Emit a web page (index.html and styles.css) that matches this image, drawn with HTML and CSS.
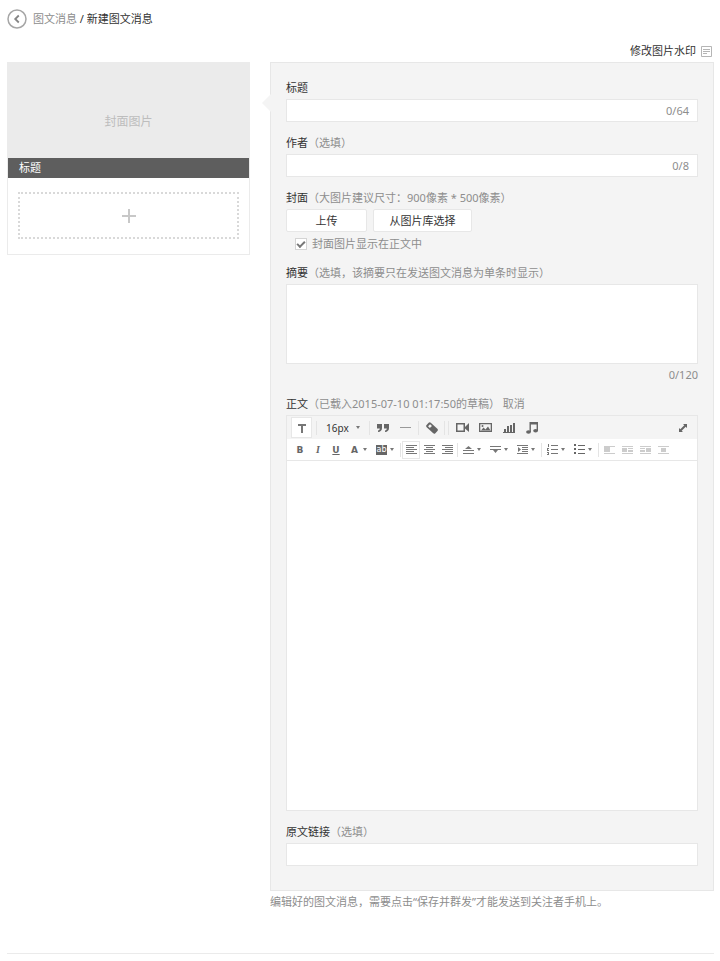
FILE: index.html
```
<!DOCTYPE html>
<html lang="zh-CN">
<head>
<meta charset="utf-8">
<meta name="viewport" content="width=device-width, initial-scale=1">
<title>新建图文消息</title>
<link rel="stylesheet" href="styles.css">
</head>
<body>
<header class="crumbs">
  <a class="back" href="#" aria-label="返回"><svg width="20" height="20" viewBox="0 0 20 20" fill="none"><circle cx="10" cy="10" r="9" stroke="#a6a6a6" stroke-width="1.5"/><path d="M11.8 6.5 8.2 10l3.6 3.5" stroke="#858585" stroke-width="1.8"/></svg></a>
  <nav><a class="muted" href="#">图文消息</a> / <span>新建图文消息</span></nav>
</header>
<div class="tools">
  <a href="#">修改图片水印
    <svg width="11" height="11" viewBox="0 0 11 11" fill="none" stroke="#b5b5b5"><path d="M.5.5h10v10H.5zM2 3.5h7M2 5.5h7M2 7.5h4"/></svg></a>
</div>
<main class="layout">
  <aside class="card">
    <div class="cover">封面图片</div>
    <div class="cover-title">标题</div>
    <button class="add" type="button" aria-label="添加"><svg width="14" height="14" viewBox="0 0 14 14" fill="#c8c8c8" shape-rendering="crispEdges"><path d="M6 0h2v14H6zM0 6h14v2H0z"/></svg></button>
  </aside>
  <section class="content">
    <form class="panel">
      <div class="field">
        <label for="title">标题</label>
        <div class="box"><input id="title" type="text"><span class="count">0/64</span></div>
      </div>
      <div class="field">
        <label for="author">作者<span class="muted">（选填）</span></label>
        <div class="box"><input id="author" type="text"><span class="count">0/8</span></div>
      </div>
      <div class="field">
        <div class="label">封面<span class="muted">（大图片建议尺寸：900像素 * 500像素）</span></div>
        <div class="uploads">
          <button class="btn" type="button">上传</button>
          <button class="btn wide" type="button">从图片库选择</button>
        </div>
        <label class="check"><input type="checkbox" checked>封面图片显示在正文中</label>
      </div>
      <div class="field">
        <label for="summary">摘要<span class="muted">（选填，该摘要只在发送图文消息为单条时显示）</span></label>
        <textarea id="summary" class="summary"></textarea>
        <span class="total">0/120</span>
      </div>
      <div class="field">
        <div class="label"><label for="body">正文</label><span class="muted">（已载入2015-07-10 01:17:50的草稿） <a href="#">取消</a></span></div>
        <div class="editor">
          <div class="bar top">
            <button class="tb large on" type="button" aria-label="文字"><svg width="12" height="12" fill="#777"><path d="M2 2h8v2H7v7H5V4H2z"/></svg></button>
            <i class="sep roomy"></i>
            <span class="size"><select aria-label="字号"><option>16px</option></select><i class="caret"></i></span>
            <i class="sep"></i>
            <button class="tb large" type="button" aria-label="引用"><svg width="12" height="12" fill="#666"><path d="M0 2h5v4C5 8.500 3.500 9.800 1 10V8.500C2.300 8.300 2.800 7.500 2.800 6.500H0zM7 2h5v4c0 2.500-1.500 3.800-4 4V8.500c1.300-.2 1.800-1 1.800-2H7z"/></svg></button>
            <button class="tb large" type="button" aria-label="分隔线"><svg width="12" height="12" fill="#999"><path d="M0 5h11v1H0z"/></svg></button>
            <i class="sep"></i>
            <button class="tb large" type="button" aria-label="清除格式"><svg width="12" height="12"><g transform="rotate(43 6 6)"><rect x="0" y="3" width="12" height="6" rx="1.500" fill="#666"/><rect x="2" y="4.500" width="2.500" height="3" fill="#f4f4f4"/></g></svg></button>
            <i class="sep"></i><i class="sep"></i>
            <button class="tb large" type="button" aria-label="视频"><svg width="13" height="12" fill="#666"><path fill-rule="evenodd" d="M0 1h9v9H0zM1.500 2.500v6h6v-6zM9 5l4-4v9L9 6.500z"/></svg></button>
            <button class="tb large" type="button" aria-label="图片"><svg width="13" height="12" fill="#666"><path fill-rule="evenodd" d="M0 1h13v9H0zM1.300 2.300v6.400h10.400V2.300z"/><path d="m2 8.500 2.500-3 2 2L9 4.500l2.500 4z"/><circle cx="3.500" cy="4" r="1"/></svg></button>
            <button class="tb large" type="button" aria-label="投票"><svg width="12" height="12" fill="#666"><path d="M0 10h12v1H0zM1 7h2v3H1zM4 4h2v6H4zM7 3h2v7H7zM10 1h2v9h-2z"/></svg></button>
            <button class="tb large" type="button" aria-label="音乐"><svg width="12" height="12" fill="#666"><path d="M3.500 0H12v9h-1.400V2.400H4.900V10H3.500z"/><ellipse cx="2.500" cy="10" rx="2.400" ry="1.700"/><ellipse cx="9.600" cy="8.800" rx="2.400" ry="1.700"/></svg></button>
            <button class="tb large end" type="button" aria-label="全屏"><svg width="10" height="10" fill="#666"><path d="M5 1h4v4L7.700 3.700 3.700 7.700 5 9H1V5l1.300 1.300 4-4z"/></svg></button>
          </div>
          <div class="bar bottom">
            <button class="tb glyph" type="button"><b>B</b></button>
            <button class="tb glyph" type="button"><em>I</em></button>
            <button class="tb glyph" type="button"><u>U</u></button>
            <button class="tb combo glyph" type="button"><span>A</span><i class="caret"></i></button>
            <button class="tb combo glyph" type="button"><span class="mark">ab</span><i class="caret"></i></button>
            <i class="sep"></i>
            <button class="tb on" type="button" aria-label="左对齐"><svg width="11" height="9" fill="#777"><path d="M0 0h11v1H0zM0 2h8v1H0zM0 4h11v1H0zM0 6h8v1H0zM0 8h11v1H0z"/></svg></button>
            <button class="tb" type="button" aria-label="居中"><svg width="11" height="9" fill="#777"><path d="M0 0h11v1H0zM2 2h7v1H2zM0 4h11v1H0zM2 6h7v1H2zM0 8h11v1H0z"/></svg></button>
            <button class="tb" type="button" aria-label="右对齐"><svg width="11" height="9" fill="#777"><path d="M0 0h11v1H0zM3 2h8v1H3zM0 4h11v1H0zM3 6h8v1H3zM0 8h11v1H0z"/></svg></button>
            <i class="sep"></i>
            <button class="tb combo" type="button" aria-label="段前距"><svg width="11" height="9" fill="#777"><path d="m2 4 3.500-3L9 4zM0 5h11v1H0zM0 8h11v1H0z"/></svg><i class="caret"></i></button>
            <button class="tb combo" type="button" aria-label="段后距"><svg width="11" height="9" fill="#777"><path d="M0 1h11v1H0zM0 4h11v1H0zM3 5h5L5.500 8z"/></svg><i class="caret"></i></button>
            <button class="tb combo" type="button" aria-label="缩进"><svg width="11" height="9" fill="#777"><path d="M0 0h11v1H0zM5 2h6v1H5zM5 4h6v1H5zM5 6h6v1H5zM0 8h11v1H0zM1 2l3 2.500L1 7z"/></svg><i class="caret"></i></button>
            <i class="sep"></i>
            <button class="tb combo" type="button" aria-label="有序列表"><svg width="11" height="11" fill="#777"><path d="M4 1h7v1H4zM4 5h7v1H4zM4 9h7v1H4zM1 0h1v3H1zM0 4h2v1H1v1h1v1H0zM0 8h2v3H0v-1h1V9H0z"/></svg><i class="caret"></i></button>
            <button class="tb combo" type="button" aria-label="无序列表"><svg width="11" height="11" fill="#666"><path d="M0 0h2v2H0zM0 4h2v2H0zM0 8h2v2H0zM4 1h7v1H4zM4 5h7v1H4zM4 9h7v1H4z"/></svg><i class="caret"></i></button>
            <i class="sep"></i>
            <div class="floats">
            <button class="tb" type="button" aria-label="图片靠左"><svg width="11" height="8" fill="#ccc"><path d="M0 0h11v1H0zM0 1h6v5H0zM0 7h11v1H0z"/></svg></button>
            <button class="tb" type="button" aria-label="图片左环绕"><svg width="11" height="8" fill="#ccc"><path d="M0 0h11v1H0zM0 2h5v4H0zM6 2h5v1H6zM6 4h5v2H6zM0 7h11v1H0z"/></svg></button>
            <button class="tb" type="button" aria-label="图片右环绕"><svg width="11" height="8" fill="#ccc"><path d="M0 0h11v1H0zM6 2h5v4H6zM0 2h5v1H0zM0 4h5v2H0zM0 7h11v1H0z"/></svg></button>
            <button class="tb" type="button" aria-label="图片居中"><svg width="11" height="8" fill="#ccc"><path d="M0 0h11v1H0zM3 2h5v4H3zM0 7h11v1H0z"/></svg></button>
            </div>
          </div>
          <textarea id="body"></textarea>
        </div>
      </div>
      <div class="field">
        <label for="link">原文链接<span class="muted">（选填）</span></label>
        <div class="box"><input id="link" type="url"></div>
      </div>
    </form>
    <p class="note">编辑好的图文消息，需要点击“保存并群发”才能发送到关注者手机上。</p>
  </section>
</main>
<hr class="rule">
</body>
</html>
```
FILE: styles.css
```
*, *::before { box-sizing: border-box; }
body {
  margin: 0;
  padding: 9px 6px 7px 7px;
  background: #fff;
  color: #333;
  font: 11px/16px "Noto Sans", "Noto Sans CJK SC", sans-serif;
}
a { color: inherit; text-decoration: none; }
svg { display: block; }
button, input, textarea, select {
  margin: 0;
  padding: 0;
  border: 0;
  border-radius: 0;
  background: none;
  color: inherit;
  font: inherit;
}
.muted { color: #8d8d8d; }

.crumbs { display: flex; align-items: center; gap: 6px; height: 20px; }
.tools { display: flex; justify-content: flex-end; margin-top: 14px; padding-right: 2px; }
.tools a { display: flex; align-items: center; gap: 5px; }

.layout {
  display: grid;
  grid-template-columns: 243px minmax(0, 1fr);
  gap: 20px;
  align-items: start;
  margin-top: 3px;
}
.card { border: 1px solid #ebebeb; padding-bottom: 15px; }
.cover {
  display: flex;
  align-items: center;
  justify-content: center;
  height: 95px;
  padding-top: 22px;
  background: #ebebeb;
  color: #bdbdbd;
  font-size: 12px;
}
.cover-title { padding: 2px 11px; background: #5e5e5e; color: #fff; }
.add {
  display: flex;
  align-items: center;
  justify-content: center;
  width: calc(100% - 20px);
  height: 47px;
  margin: 14px 10px 0;
  border: 2px dotted #d9d9d9;
}

.panel {
  position: relative;
  display: flex;
  flex-direction: column;
  gap: 13px;
  padding: 17px 15px 24px;
  background: #f4f4f4;
  border: 1px solid #e7e7e7;
}
.panel::before {
  content: "";
  position: absolute;
  top: 31px;
  left: -9px;
  border: solid transparent;
  border-width: 9px 9px 9px 0;
  border-right-color: #f4f4f4;
}
.field { display: flex; flex-direction: column; gap: 3px; }
.box { display: flex; align-items: center; height: 23px; border: 1px solid #e7e7e7; background: #fff; }
.box input { flex: 1; min-width: 0; height: 100%; padding: 0 8px; }
.count { padding-right: 8px; color: #8d8d8d; }
.total { align-self: flex-end; color: #8d8d8d; }
.uploads { display: flex; gap: 6px; }
.btn { width: 81px; height: 23px; border: 1px solid #e7e7e7; border-radius: 2px; background: #fff; }
.btn.wide { width: 99px; }
.check { display: flex; align-items: center; gap: 5px; padding-left: 9px; color: #8d8d8d; }
.check input {
  width: 12px;
  height: 12px;
  appearance: none;
  display: grid;
  place-items: center;
  border: 1px solid #d4d4d4;
  background: #fff;
}
.check input:checked::before {
  content: "";
  width: 8px;
  height: 5px;
  border: solid #777;
  border-width: 0 0 2px 2px;
  transform: translateY(-1px) rotate(-45deg);
}
.field .check { margin-top: 1px; }
textarea { display: block; width: 100%; padding: 8px; resize: none; }
.summary { height: 80px; border: 1px solid #e7e7e7; background: #fff; }

.editor { border: 1px solid #e7e7e7; background: #fff; }
.editor textarea { height: 349px; }
.bar { display: flex; align-items: center; }
.top { height: 23px; padding: 0 4px; background: #f4f4f4; }
.bottom { height: 22px; padding-left: 4px; border-bottom: 1px solid #e7e7e7; }
.sep { flex: none; width: 1px; height: 14px; margin: 0 1px; background: #e4e4e4; }
.sep.roomy { margin: 0 4px; }
.top .sep + .sep { margin: 0 2px; }
.tb { display: flex; align-items: center; justify-content: center; flex: none; width: 18px; height: 18px; }
.tb.large { width: 23px; height: 21px; }
.tb.on { border: 1px solid #e7e7e7; background: #fff; }
.tb.large.on { width: 21px; }
.tb.end { margin-left: auto; margin-right: -1px; }
.tb.combo { justify-content: flex-start; gap: 3px; width: 27px; padding-left: 4px; }
.floats { display: flex; }
.caret { border: 2px solid transparent; border-top: 3px solid #777; border-bottom: 0; }
.size { position: relative; display: flex; align-items: center; width: 47px; height: 18px; }
.size select { width: 100%; padding-left: 5px; appearance: none; font-size: 10px; }
.size .caret { position: absolute; right: 8px; pointer-events: none; }
.glyph { color: #666; font: bold 9px/12px "DejaVu Sans", sans-serif; }
.glyph em { font: italic bold 10px/12px "Liberation Serif", serif; }
.glyph span { width: 11px; text-align: center; }
.glyph .mark { background: #666; color: #fff; font-size: 8px; line-height: 10px; font-weight: normal; }

.note { margin: 3px 0 0; color: #8d8d8d; }
.rule { margin: 43px 0 0; border: 0; border-top: 1px solid #ebebeb; }
```
